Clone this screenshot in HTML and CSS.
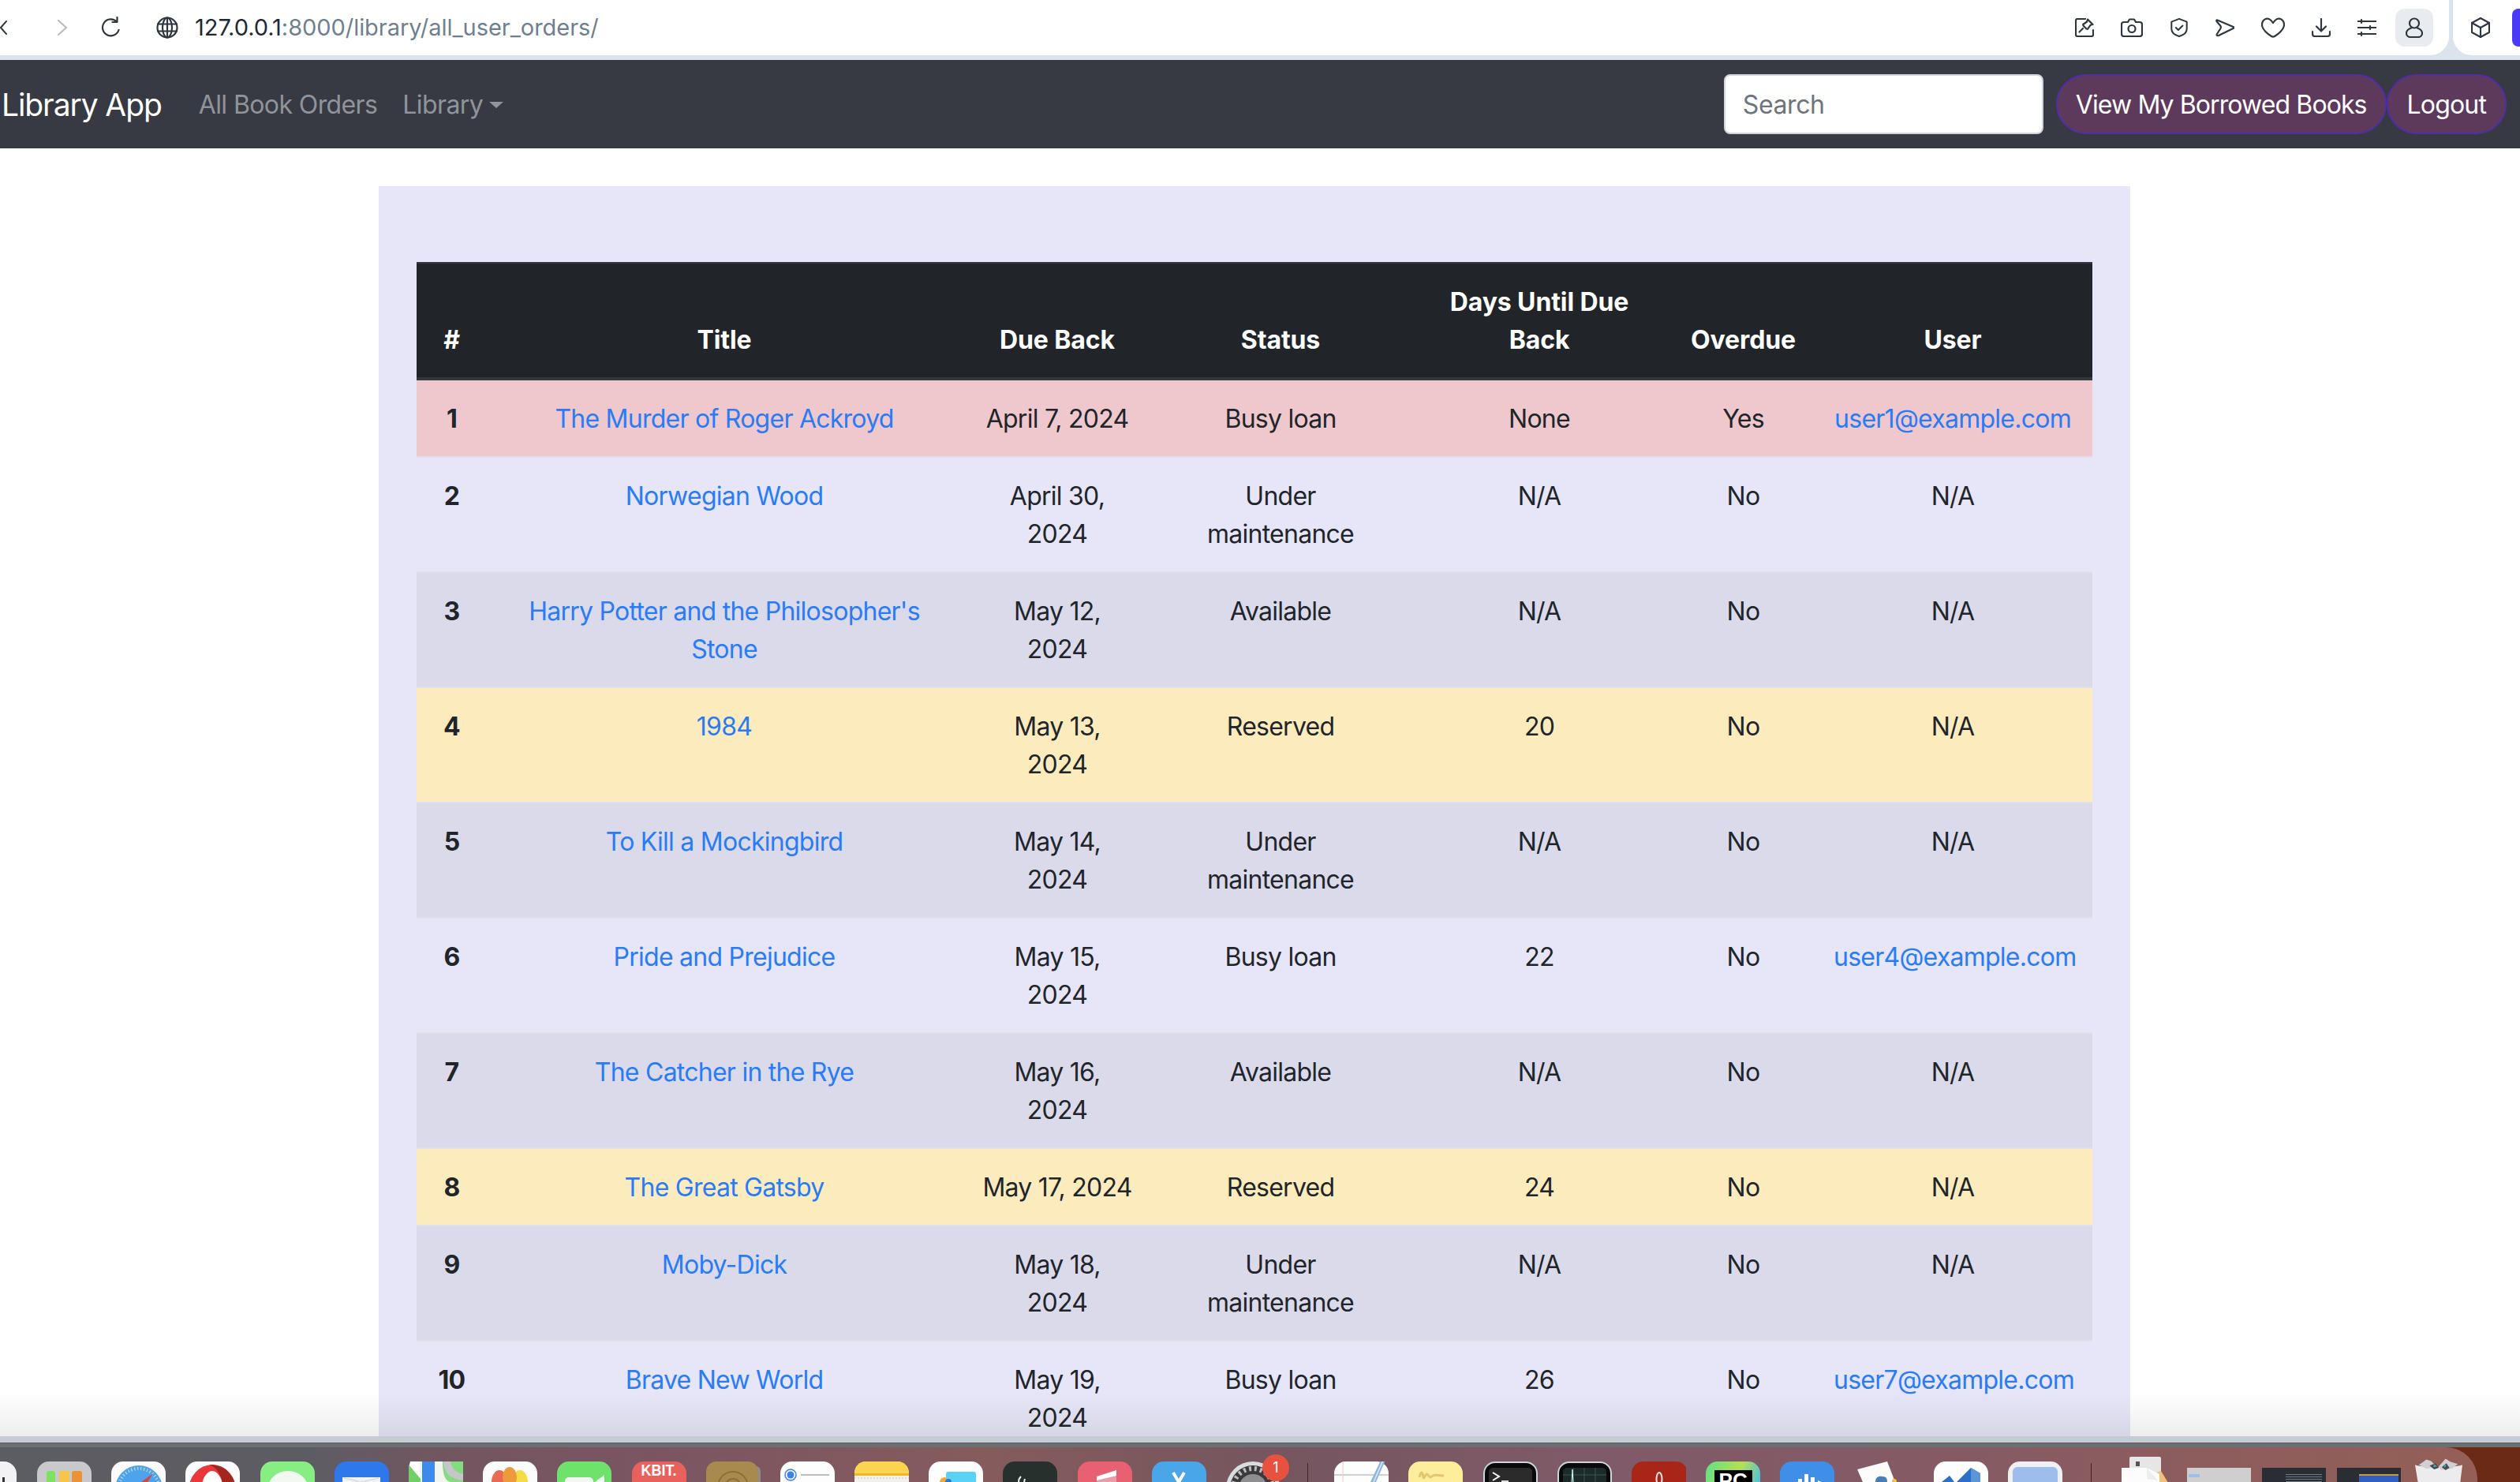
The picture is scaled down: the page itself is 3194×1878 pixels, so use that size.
FILE: index.html
```html
<!DOCTYPE html>
<html lang="en">
<head>
<meta charset="utf-8">
<title>Library App</title>
<link rel="stylesheet" href="styles.css">
</head>
<body>
<header class="browser">
  <div class="browser-main">
    <div class="browser-left">
      <svg class="ic back" viewBox="0 0 10 20"><path d="M9 1 1 10l8 9"/></svg>
      <svg class="ic forward" viewBox="0 0 12 20"><path d="M1 1l10 9-10 9"/></svg>
      <svg class="ic reload" viewBox="0 0 24 28"><path d="M20 6.5A10.5 10.5 0 1 0 22.500 17"/><path d="M20.500 1v6h-6"/></svg>
      <svg class="ic globe" viewBox="0 0 28 28"><circle cx="14" cy="14" r="12.500"/><ellipse cx="14" cy="14" rx="6" ry="12.500"/><path d="M14 1.500v25M2 9.500h24M2 18.500h24"/></svg>
      <span class="url"><span class="url-host">127.0.0.1</span>:8000/library/all_user_orders/</span>
    </div>
    <div class="browser-right">
      <svg class="ic tool" viewBox="0 0 24 24"><path d="M13 1H3a2 2 0 0 0-2 2v18a2 2 0 0 0 2 2h18a2 2 0 0 0 2-2v-6"/><path d="M16 1.500l6.500 6.500-3 .8-3.500 5-1.500-.3-4-4-.3-1.500 5-3.500z"/><path d="M10 13l-4.500 4.500"/></svg>
      <svg class="ic tool wide" viewBox="0 0 28 24"><path d="M4 5h5l2-3.500h6L19 5h5a3 3 0 0 1 3 3v12a3 3 0 0 1-3 3H4a3 3 0 0 1-3-3V8a3 3 0 0 1 3-3z"/><circle cx="14" cy="13.500" r="4.500"/></svg>
      <svg class="ic tool" viewBox="0 0 24 26"><path d="M12 1l10.500 4v10c0 5-5 8.500-10.500 10C6.500 23.500 1.500 20 1.500 15V5z"/><path d="M7.500 13l3.300 3.300 6-6"/></svg>
      <svg class="ic tool" viewBox="0 0 24 24"><path d="M2.500 2.500 22.500 11c1 .5 1 1.500 0 2L4 22c-2 .8-3-.5-2-2l4.500-7c.5-1 .5-2 0-3L1.500 4c-.5-1 0-2 1-1.500z"/></svg>
      <svg class="ic tool wide2" viewBox="0 0 30 26"><path d="M15 7C12 2 8 1 5.500 2 2 3.500 1 7 1 9.500 1 15 8 21 13 24c1.300.8 2.700.8 4 0 5-3 12-9 12-14.500C29 7 28 3.500 24.500 2 22 1 18 2 15 7z"/></svg>
      <svg class="ic tool" viewBox="0 0 24 24"><path d="M12 1v15M6 10.500l6 6 6-6"/><path d="M1 17v3a3 3 0 0 0 3 3h16a3 3 0 0 0 3-3v-3"/></svg>
      <svg class="ic tool" viewBox="0 0 24 22"><path d="M0 3h24M0 11h24M0 19h24"/><path d="M5 1v4M16 9v4M5 17v4"/></svg>
      <span class="profile"><svg class="ic profile-ic" viewBox="0 0 22 26"><circle cx="11" cy="7.500" r="6"/><path d="M7 13.500C3 15 1 17 1 20c0 3 2.500 5 5 5h10c2.500 0 5-2 5-5 0-3-2-5-6-6.500"/></svg></span>
    </div>
  </div>
  <div class="browser-side">
    <svg class="ic cube" viewBox="0 0 24 26"><path d="M12 1l11 6v12l-11 6-11-6V7z"/><path d="M1 7l11 6 11-6M12 13v12"/></svg>
    <span class="ext"></span>
  </div>
</header>

<nav class="navbar">
  <a class="brand" href="#">Library App</a>
  <a class="nav-link" href="#">All Book Orders</a>
  <a class="nav-link" href="#">Library<span class="caret"></span></a>
  <form class="nav-form">
    <input class="search" type="text" placeholder="Search">
    <a class="pill pill-wide" href="#">View My Borrowed Books</a>
    <a class="pill" href="#">Logout</a>
  </form>
</nav>

<main class="page">
  <section class="panel">
    <table class="orders">
      <colgroup>
        <col class="c-num"><col class="c-title"><col class="c-due"><col class="c-status"><col class="c-days"><col class="c-over"><col class="c-user">
      </colgroup>
      <thead>
        <tr><th>#</th><th>Title</th><th>Due Back</th><th>Status</th><th>Days Until Due Back</th><th>Overdue</th><th>User</th></tr>
      </thead>
      <tbody>
        <tr class="danger"><th>1</th><td><a href="#">The Murder of Roger Ackroyd</a></td><td class="nowrap">April 7, 2024</td><td>Busy loan</td><td>None</td><td>Yes</td><td><a href="#">user1@example.com</a></td></tr>
        <tr><th>2</th><td><a href="#">Norwegian Wood</a></td><td>April 30, 2024</td><td>Under maintenance</td><td>N/A</td><td>No</td><td>N/A</td></tr>
        <tr class="stripe"><th>3</th><td><a href="#">Harry Potter and the Philosopher's Stone</a></td><td>May 12, 2024</td><td>Available</td><td>N/A</td><td>No</td><td>N/A</td></tr>
        <tr class="warning"><th>4</th><td><a href="#">1984</a></td><td>May 13, 2024</td><td>Reserved</td><td>20</td><td>No</td><td>N/A</td></tr>
        <tr class="stripe"><th>5</th><td><a href="#">To Kill a Mockingbird</a></td><td>May 14, 2024</td><td>Under maintenance</td><td>N/A</td><td>No</td><td>N/A</td></tr>
        <tr><th>6</th><td><a href="#">Pride and Prejudice</a></td><td>May 15, 2024</td><td>Busy loan</td><td>22</td><td>No</td><td><a href="#">user4@example.com</a></td></tr>
        <tr class="stripe"><th>7</th><td><a href="#">The Catcher in the Rye</a></td><td>May 16, 2024</td><td>Available</td><td>N/A</td><td>No</td><td>N/A</td></tr>
        <tr class="warning"><th>8</th><td><a href="#">The Great Gatsby</a></td><td class="nowrap">May 17, 2024</td><td>Reserved</td><td>24</td><td>No</td><td>N/A</td></tr>
        <tr class="stripe"><th>9</th><td><a href="#">Moby-Dick</a></td><td>May 18, 2024</td><td>Under maintenance</td><td>N/A</td><td>No</td><td>N/A</td></tr>
        <tr><th>10</th><td><a href="#">Brave New World</a></td><td>May 19, 2024</td><td>Busy loan</td><td>26</td><td>No</td><td><a href="#">user7@example.com</a></td></tr>
      </tbody>
    </table>
  </section>
</main>

<div class="window-edge"></div>

<footer class="desktop">
  <div class="dock">
    <svg class="app finder" viewBox="0 0 69 26"><rect width="69" height="40" rx="16" fill="#f2f2f4"/><rect x="51" y="20" width="3" height="6" fill="#333"/></svg>
    <svg class="app" viewBox="0 0 69 26"><rect width="69" height="40" rx="15" fill="#c9c9cb"/><rect x="12" y="12" width="11" height="16" rx="3" fill="#7ee25f"/><rect x="28" y="12" width="13" height="16" rx="3" fill="#f7c548"/><rect x="44" y="12" width="13" height="16" rx="3" fill="#ea9235"/></svg>
    <svg class="app" viewBox="0 0 69 26"><rect width="69" height="40" rx="15" fill="#fbfbfb"/><circle cx="35" cy="35" r="30" fill="#4ea4ec"/><circle cx="35" cy="35" r="26" fill="none" stroke="#cfe6fa" stroke-width="4" stroke-dasharray="1 3"/><path d="M53 15 38 26h8z" fill="#d8453a"/></svg>
    <svg class="app" viewBox="0 0 69 26"><rect width="69" height="40" rx="15" fill="#fbfbfb"/><ellipse cx="34" cy="37" rx="30" ry="33" fill="#e9373c"/><path d="M30 4c20-1 34 14 34 33H48C48 22 42 8 30 4z" fill="#a3261f"/><ellipse cx="34" cy="38" rx="14" ry="26" fill="#fff"/></svg>
    <svg class="app" viewBox="0 0 69 26"><rect width="69" height="40" rx="15" fill="#86ee83"/><ellipse cx="35" cy="36" rx="26" ry="24" fill="#f3f8f1"/></svg>
    <svg class="app" viewBox="0 0 69 26"><rect width="69" height="40" rx="15" fill="#2f78ea"/><rect x="10" y="20" width="48" height="10" fill="#f1f2f4"/><path d="M12 21l22 5 22-5" fill="none" stroke="#cfd2d6" stroke-width="1"/></svg>
    <svg class="app" viewBox="0 0 69 26"><rect width="69" height="40" rx="15" fill="#f2f5f0"/><path d="M0 8l14 14V0H2z" fill="#fff"/><path d="M0 4l15 18V26H0z" fill="#6fd06a"/><rect x="17" width="16" height="26" fill="#3c8aeb"/><path d="M43 0h26v26H54C44 26 43 10 43 0z" fill="#85dc7e"/><path d="M44 0c1 14 8 22 25 24V16C59 14 54 8 53 0z" fill="#c4c6c9"/></svg>
    <svg class="app" viewBox="0 0 69 26"><rect width="69" height="40" rx="15" fill="#fbfbfb"/><ellipse cx="21" cy="26" rx="10" ry="15" fill="#e86a55"/><ellipse cx="47" cy="26" rx="10" ry="15" fill="#f5dc46"/><ellipse cx="34" cy="20" rx="9" ry="13" fill="#ed9a3d"/></svg>
    <svg class="app" viewBox="0 0 69 26"><rect width="69" height="40" rx="15" fill="#6fe26c"/><rect x="10" y="20" width="36" height="10" rx="5" fill="#f4f6f4"/><path d="M48 26l12-9v9z" fill="#f4f6f4"/></svg>
    <div class="app calendar"><span class="cal-head">KBIT.</span></div>
    <svg class="app" viewBox="0 0 69 26"><rect x="10" y="6" width="59" height="30" rx="6" fill="#8d8d8d"/><rect width="66" height="40" rx="13" fill="#a88a4e"/><circle cx="34" cy="32" r="10" fill="none" stroke="#8c7039" stroke-width="2"/><circle cx="34" cy="32" r="19" fill="none" stroke="#8c7039" stroke-width="2"/></svg>
    <svg class="app" viewBox="0 0 69 26"><rect width="69" height="40" rx="15" fill="#fdfdfd"/><circle cx="13" cy="17" r="7" fill="none" stroke="#3d82ea" stroke-width="1.500"/><circle cx="13" cy="17" r="4.500" fill="#3d82ea"/><rect x="26" y="16" width="36" height="2" fill="#bdbdbd"/></svg>
    <svg class="app" viewBox="0 0 69 26"><rect width="69" height="40" rx="15" fill="#f2f1ee"/><path d="M0 15C0 6 6 0 15 0h39c9 0 15 6 15 15v2H0z" fill="#fbd54f"/><rect y="15" width="69" height="3" fill="#efb62a"/><path d="M0 21h69" stroke="#ccc" stroke-dasharray="2 2"/></svg>
    <svg class="app" viewBox="0 0 69 26"><rect width="69" height="40" rx="15" fill="#fdfdfd"/><rect x="22" y="13" width="38" height="30" rx="3" fill="#5ad2f8"/><circle cx="20" cy="26" r="6" fill="#f0a93a"/><circle cx="25" cy="26" r="4" fill="#2b78d8"/></svg>
    <svg class="app" viewBox="0 0 69 26"><rect width="69" height="40" rx="15" fill="#27302d"/><path d="M20 26c0-3 1-5 3-7M27 26l1-4" fill="none" stroke="#eee" stroke-width="2"/></svg>
    <svg class="app" viewBox="0 0 69 26"><rect width="69" height="40" rx="15" fill="#ea6073"/><path d="M24 19l25-8v15H24z" fill="#fff"/><path d="M24 24l25-6v8H24z" fill="#ec9aa6"/></svg>
    <svg class="app" viewBox="0 0 69 26"><rect width="69" height="40" rx="15" fill="#48a6e9"/><path d="M27 14l7 12 7-12" fill="none" stroke="#fff" stroke-width="4"/></svg>
    <div class="app gear-box">
      <svg class="gear" viewBox="0 0 69 26"><circle cx="34" cy="34" r="34" fill="#d8dde0"/><circle cx="34" cy="34" r="29" fill="#3a3a3c"/><circle cx="34" cy="34" r="25" fill="none" stroke="#bbb" stroke-width="6" stroke-dasharray="3 4"/><circle cx="34" cy="34" r="18" fill="#8e8e90"/></svg>
      <span class="badge">1</span>
    </div>
    <span class="sep first"></span>
    <svg class="app" viewBox="0 0 69 26"><rect width="69" height="40" rx="15" fill="#fdfdfd"/><path d="M0 17h69" stroke="#c4c0c0" stroke-width="1.500"/><path d="M11 0v26" stroke="#f3c7c7"/><path d="M46 26 62-8l5 2-14 32z" fill="#8cb6de"/><path d="M50 26 64-6" stroke="#dfeaf5" stroke-width="1.500"/></svg>
    <svg class="app" viewBox="0 0 69 26"><rect width="69" height="40" rx="15" fill="#fdee9b"/><path d="M14 20c2-8 4-8 5 0 1 4 3-7 6-3 2 3 3 4 6 1 3-2 8 0 14 0" fill="none" stroke="#e2c76e" stroke-width="3"/></svg>
    <svg class="app" viewBox="0 0 69 26"><rect x="1" y="1" width="67" height="44" rx="14" fill="#0a0a0a" stroke="#cbd6dd" stroke-width="2"/><rect x="7" y="8" width="55" height="30" rx="5" fill="#2b2b2b"/><path d="M12 14l8 5-8 5" fill="none" stroke="#fff" stroke-width="2"/><rect x="23" y="24" width="9" height="2" fill="#ddd"/></svg>
    <svg class="app" viewBox="0 0 69 26"><rect x="1" y="1" width="67" height="44" rx="14" fill="#0a0a0a" stroke="#cbd6dd" stroke-width="2"/><rect x="7" y="8" width="55" height="30" rx="5" fill="#1d2a2a"/><path d="M7 17h55M20 8v20M34 8v20M48 8v20" stroke="#3d5552"/><path d="M18 26l1-16 1 16" fill="none" stroke="#cfe" stroke-width="1"/></svg>
    <svg class="app" viewBox="0 0 69 26"><rect width="71" height="40" rx="15" fill="#a82518"/><ellipse cx="35" cy="22" rx="3.500" ry="8" fill="none" stroke="#f4e6e4" stroke-width="2"/></svg>
    <div class="app pycharm"><span class="pc">PC</span></div>
    <svg class="app" viewBox="0 0 69 26"><rect width="69" height="40" rx="15" fill="#3f8fe9"/><rect x="23" y="22" width="5" height="4" fill="#fff"/><rect x="31" y="16" width="5" height="10" fill="#fff"/><rect x="39" y="20" width="5" height="6" fill="#fff"/><path d="M48 24l5 2h-5z" fill="#fff"/></svg>
    <svg class="app doc" viewBox="0 0 69 26"><path d="M1 10 39 0l10 26H8z" fill="#fcfcfc"/><path d="M24 26c0-6 4-8 9-7 5 0 6 3 6 7z" fill="#4a7fb5"/><circle cx="48" cy="25" r="3" fill="#f1c34a"/></svg>
    <svg class="app" viewBox="0 0 69 26"><rect width="69" height="40" rx="15" fill="#fdfdfd"/><path d="M10 26l10-8 6 8z" fill="#2a6fc9"/><path d="M29 26l18-18 12 7v11z" fill="#2a6fc9"/><path d="M47 8l12 7v11H47z" fill="#5b95d8"/></svg>
    <svg class="app" viewBox="0 0 69 26"><rect width="69" height="40" rx="15" fill="#eef0f2"/><rect x="6" y="7" width="57" height="34" rx="6" fill="#9dbdec"/></svg>
    <span class="sep second"></span>
    <svg class="stack" viewBox="0 0 76 40"><rect x="22" y="0" width="40" height="30" rx="2" fill="#e6e6e6"/><path d="M30 6h5v6h-5z" fill="#555"/><path d="M2 40l60-22 12 20-6 2z" fill="#f2c078"/><path d="M12 14h32l16 8v18H12z" fill="#fcfcfc"/><path d="M44 14l14 16-14-2z" fill="#eee"/></svg>
    <div class="thumb light"><span class="thumb-bar"></span></div>
    <div class="thumb dark"><span class="thumb-code"></span></div>
    <div class="thumb dark alt"><span class="thumb-blue"></span></div>
    <svg class="trash" viewBox="0 0 64 34"><path d="M1 10c8 4 52 4 62 0L60 34H5z" fill="#ececee"/><path d="M6 10l10-7 6 2 8 8-14 2zM32 12l9-10 6 4 10 3-8 6-14 2z" fill="#cfcfd4"/><path d="M20 11l8-3 4 6-6 2zM36 13l6-5 4 6-5 3z" fill="#4a4750"/><path d="M26 9l4 3-5 1zM38 10l4 0-2 4z" fill="#3bb2a0"/></svg>
  </div>
</footer>
</body>
</html>
```

FILE: styles.css
```css
* { box-sizing: border-box; }
html, body { margin: 0; height: 100%; }
body {
  width: 3194px;
  height: 1878px;
  overflow: hidden;
  display: flex;
  flex-direction: column;
  font-family: Inter, "Liberation Sans", sans-serif;
  font-size: 32px;
  line-height: 48px;
  color: #212529;
  background: #fff;
}
a { text-decoration: none; color: #2a7bf6; }

/* browser chrome */
.browser {
  height: 76px;
  flex: none;
  display: flex;
  gap: 5px;
  background: #dbe3ec;
  padding-bottom: 6px;
}
.browser-main {
  width: 3106px;
  background: #fff;
  border-radius: 0 0 24px 0;
  display: flex;
  justify-content: space-between;
  align-items: center;
  padding-right: 20px;
}
.browser-side {
  flex: 1;
  background: #fff;
  border-radius: 0 0 0 24px;
  display: flex;
  align-items: center;
  padding-left: 23px;
  gap: 28px;
}
.browser-left, .browser-right { display: flex; align-items: center; }
.ic { fill: none; stroke: #2e3740; stroke-width: 2.200; stroke-linecap: round; stroke-linejoin: round; flex: none; }
.back { width: 9px; height: 20px; }
.forward { width: 12px; height: 20px; margin-left: 64px; stroke: #b8bdc2; }
.reload { width: 24px; height: 28px; margin-left: 43px; }
.globe { width: 28px; height: 28px; margin-left: 46px; }
.url { margin-left: 21px; font-size: 29px; line-height: 40px; color: #6f7f90; letter-spacing: -0.05px; }
.url-host { color: #1f2933; }
.browser-right { gap: 34px; }
.tool { width: 24px; height: 24px; }
.wide { width: 28px; }
.wide2 { width: 30px; height: 26px; }
.profile {
  width: 48px;
  height: 48px;
  margin-left: -10px;
  border-radius: 12px;
  background: #e8ecf0;
  display: flex;
  align-items: center;
  justify-content: center;
}
.profile-ic { width: 22px; height: 26px; }
.cube { width: 24px; height: 26px; }
.ext { width: 10px; height: 48px; background: #4a3af5; border-radius: 8px 0 0 8px; }

/* navbar */
.navbar {
  flex: none;
  height: 112px;
  background: #373a42;
  display: flex;
  align-items: center;
  padding: 0 17px 0 2px;
}
.brand { color: #fff; font-size: 39px; line-height: 60px; margin-right: 31px; letter-spacing: -1.1px; position: relative; top: 1px; }
.nav-link { color: #90949a; padding: 0 16px; letter-spacing: -0.6px; display: flex; align-items: center; position: relative; top: 1px; }
.caret {
  width: 0;
  height: 0;
  margin-left: 8px;
  border-top: 8px solid #90949a;
  border-left: 9px solid transparent;
  border-right: 9px solid transparent;
}
.nav-form { margin-left: auto; display: flex; align-items: center; }
.search {
  width: 405px;
  height: 76px;
  border: 2px solid #ced4da;
  border-radius: 8px;
  padding: 0 22px;
  margin-right: 16px;
  font: inherit;
  letter-spacing: -0.4px;
  background: #fff;
}
.search::placeholder { color: #6c757d; opacity: 1; }
.pill {
  height: 76px;
  display: flex;
  align-items: center;
  padding: 1px 24px 0;
  border: 2px solid #512da8;
  border-radius: 38px;
  background: #5d3a5c;
  color: #fff;
  letter-spacing: -0.85px;
}
.pill-wide { padding: 1px 23px 0; letter-spacing: -0.9px; }

/* content */
.page {
  flex: 1;
  min-height: 0;
  overflow: hidden;
  position: relative;
}
.page::after {
  content: "";
  position: absolute;
  left: 0;
  right: 0;
  bottom: 0;
  height: 56px;
  background: linear-gradient(to bottom, rgba(0,0,0,0), rgba(0,0,0,.07));
}
.panel {
  width: 2220px;
  min-height: 1700px;
  margin: 48px 0 0 480px;
  padding: 96px 48px 48px;
  background: #e6e6f8;
}
.orders {
  width: 2124px;
  table-layout: fixed;
  border-collapse: separate;
  border-spacing: 0;
}
.c-num { width: 89px; }
.c-title { width: 602px; }
.c-due { width: 242px; }
.c-status { width: 324px; }
.c-days { width: 332px; }
.c-over { width: 185px; }
.c-user { width: 350px; }
.orders th, .orders td {
  padding: 25px 24px 23px;
  text-align: center;
  vertical-align: top;
  letter-spacing: -0.75px;
  border-bottom: 2px solid #dfe0ea;
}
.orders td:nth-child(3) { padding-left: 32px; padding-right: 32px; }
.orders th:last-child, .orders td:last-child { padding-left: 22px; padding-right: 26px; }
.orders th { font-weight: 700; }
.orders thead th {
  background: #212529;
  color: #fff;
  vertical-align: bottom;
  letter-spacing: -0.1px;
  border-top: 2px solid #32383e;
  border-bottom: 4px solid #32383e;
}
.danger th, .danger td { background: #eec8cd; }
.warning th, .warning td { background: #fcecbd; }
.stripe th, .stripe td { background: #dadaeb; }
.orders td.nowrap:nth-child(3) { white-space: nowrap; padding-left: 0; padding-right: 0; }

.window-edge {
  flex: none;
  height: 14px;
  background: linear-gradient(to bottom, #c5ccd4 0 8px, #55595c 8px 9px, #6d7073 9px);
}

/* desktop */
.desktop {
  flex: none;
  height: 44px;
  background: linear-gradient(100deg, #4a1408, #6a2a16);
  overflow: hidden;
}
.dock {
  width: 3140px;
  height: 60px;
  border-radius: 0 40px 0 0;
  background: linear-gradient(to right, #5c5c63 0, #5e5c63 400px, #72565f 560px, #7a5562 800px, #855b5c 1250px, #75565f 1620px, #7f5a68 2000px, #845a65 2400px, #935f57 3100px);
  display: flex;
  align-items: flex-start;
  padding: 18px 0 0 0;
}
.app { flex: none; width: 69px; height: 26px; margin-right: 25.2px; overflow: hidden; display: block; }
.finder { margin-left: -48px; margin-right: 26px; }
.calendar { background: #e8615c; border-radius: 15px 15px 0 0; color: #fff; text-align: center; }
.cal-head { font-family: "Liberation Sans", sans-serif; font-size: 18px; font-weight: 700; line-height: 22px; display: block; transform: scaleY(1.1); }
.gear-box { position: relative; overflow: visible; }
.gear { width: 69px; height: 26px; display: block; }
.badge {
  position: absolute;
  left: 46px;
  top: -9px;
  width: 34px;
  height: 34px;
  border-radius: 50%;
  background: #e8503f;
  color: #fff;
  font-size: 18px;
  line-height: 34px;
  text-align: center;
}
.sep { flex: none; width: 1px; height: 26px; background: #43222c; }
.sep.first { margin: 2px 33px 0 9px; }
.sep.second { margin: 2px 26px 0 11px; }
.pycharm { background: linear-gradient(110deg, #5fe08a, #b6e04f 60%, #4ebee0); border-radius: 15px 15px 0 0; display: flex; justify-content: center; }
.pc { width: 48px; height: 26px; margin-top: 11px; background: #000; color: #fff; font-family: "Liberation Sans", sans-serif; font-weight: 700; font-size: 26px; line-height: 26px; text-align: center; }
.doc { width: 73px; margin-right: 27px; }
.stack { flex: none; width: 76px; height: 40px; margin-top: -6px; margin-right: 19px; }
.thumb { flex: none; width: 81px; height: 40px; margin-top: 8px; margin-right: 14px; overflow: hidden; }
.thumb.light { background: #cfcfcf; }
.thumb.dark { background: #2a2d33; }
.thumb-bar { display: block; width: 14px; height: 4px; margin: 8px 0 0 2px; background: #9dbdec; }
.thumb-code { display: block; width: 46px; height: 14px; margin: 8px 0 0 30px; background: repeating-linear-gradient(to bottom, #6d7a80 0 1px, transparent 1px 3px); }
.thumb-blue { display: block; width: 50px; height: 10px; margin: 8px 0 0 28px; background: #2f5fc0; border-top: 2px solid #c49a3a; }
.trash { flex: none; width: 62px; height: 34px; margin-top: -6px; margin-left: 3px; }
```
